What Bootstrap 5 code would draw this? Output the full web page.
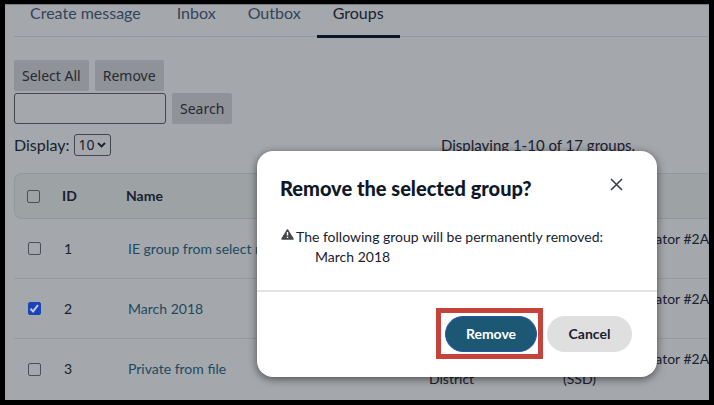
<!DOCTYPE html>
<html lang="en">
<head>
<meta charset="utf-8">
<meta name="viewport" content="width=device-width, initial-scale=1">
<title>Groups</title>
<link href="https://cdn.jsdelivr.net/npm/bootstrap@5.3.0/dist/css/bootstrap.min.css" rel="stylesheet">
<style>
body { font-family: Lato, "Liberation Sans", sans-serif; font-size: 15px; line-height: 20px; color: #19212f; background: #000; }
.frame { height: 100vh; padding: 4px 5px 5px; }
.screen { background: #a4a7ac; overflow: hidden; box-shadow: inset 0 1px 1px #777a7f; }
.tabs { border-bottom: 1px solid #94979d; height: 33px; margin-left: 9px; }
.tabs .nav-link { padding: 0 16px; height: 34px; font-size: 16px; line-height: 17px; color: #33445b; white-space: nowrap; border-bottom: 3px solid transparent; }
.tabs .nav-link:first-child { padding-right: 20px; }
.tabs .nav-link.active { color: #19212f; border-bottom-color: #0c1626; }
.tools { padding: 23px 0 0 9px; font-size: 15px; }
.tool-gap { gap: 6px; }
.tool-btn { font-family: "Noto Sans", sans-serif; font-size: 14px; line-height: 19px; height: 31px; padding: 6px 8px; border: 0; border-radius: 2px; background: #8f9298; color: #272a30; }
.search-row { margin-top: 2px; }
.search-box { width: 152px; height: 31px; border: 1px solid #43464c; border-radius: 3px; background: transparent; }
.count-row { margin-top: 10px; }
.count-label { font-size: 16px; }
.count-select { width: 37px; height: 22px; padding: 0 4px; font-family: "Noto Sans", sans-serif; font-size: 14px; line-height: 18px; border: 1px solid #43464c; border-radius: 3px; color: #19212f; appearance: none;
  background: url("data:image/svg+xml,%3Csvg xmlns='http://www.w3.org/2000/svg' viewBox='0 0 9 6'%3E%3Cpath d='M1 1l3.500 3.500L8 1' fill='none' stroke='%2319212f' stroke-width='1.800'/%3E%3C/svg%3E") no-repeat right 4px center / 9px 6px; }
.display-total { width: 268px; font-size: 15px; }
.grid-wrap { margin: 17px 0 0 9px; }
.group-table { table-layout: fixed; width: 100%; border-collapse: separate; border-spacing: 0; white-space: nowrap; font-size: 14px; }
.group-table th { height: 46px; padding: 0; background: #9da2a5; border: solid #92979b; border-width: 1px 0; font-weight: 700; }
.group-table th:first-child { border-left-width: 1px; border-radius: 8px 0 0 8px; }
.group-table td { height: 60px; padding: 0; vertical-align: middle; border-bottom: 1px solid #969a9f; }
.group-table tr:last-child td { border-bottom: 0; }
.group-table th:first-child { padding-left: 12px; }
.group-table td:first-child { padding-left: 14px; }
.group-table td:nth-child(2), .group-table td:nth-child(3) { padding-left: 2px; }
.group-table a { color: #1c4a60; text-decoration: none; }
.c-check { width: 48px; } .c-id { width: 64px; } .c-name { width: 303px; } .c-org { width: 134px; } .c-code { width: 33px; }
.tick { display: block; appearance: none; width: 13px; height: 13px; margin: 0; border: 1px solid #4c4f55; border-radius: 2px; background: transparent; }
.tick:checked { border-color: #1b43b8; background: #1b43b8 url("data:image/svg+xml,%3Csvg xmlns='http://www.w3.org/2000/svg' viewBox='0 0 13 13'%3E%3Cpath d='M2.500 6.800l2.600 2.600L10 3' fill='none' stroke='%23c4c9d4' stroke-width='2'/%3E%3C/svg%3E") center / 13px 13px; }
.dialog-layer { position: absolute; inset: 151px 57px auto 257px; }
.dialog-box { border: 0; border-radius: 16px; background: #fff; box-shadow: 0 2px 8px rgba(0,0,0,.55); color: #19212f; }
.dialog-head { padding: 23px 34px 0 23px; }
.dialog-title { font-size: 20px; line-height: 28px; font-weight: 900; color: #0f1828; white-space: nowrap; }
.close-btn { padding: 0; border: 0; background: none; line-height: 0; margin-top: 4px; }
.dialog-text { padding: 25px 24px 23px; font-size: 14px; border-bottom: 2px solid #e2e3e4; }
.dialog-text .item { padding-left: 34px; }
.warn-line { gap: 2px; }
.dialog-foot { padding: 16px 25px 18px; font-size: 14px; }
.callout-frame { border: 5px solid #c5433a; padding: 3px 1px 2px 4px; }
.pill { height: 36px; border-radius: 18px; font-size: 14px; line-height: 20px; font-weight: 700; padding: 0; }
.pill-remove { width: 92px; border: 1px solid #2456ae; background: #1c5874; color: #fff; }
.pill-cancel { width: 85px; border: 0; background: #dfdfdf; color: #19212f; }
</style>
</head>
<body>
<div class="frame d-flex">
  <main class="screen flex-grow-1">
    <nav class="nav tabs flex-nowrap" aria-label="Messages">
      <a class="nav-link" href="#">Create message</a>
      <a class="nav-link" href="#">Inbox</a>
      <a class="nav-link" href="#">Outbox</a>
      <a class="nav-link active" href="#" aria-current="page">Groups</a>
    </nav>
    <div class="tools">
      <div class="d-flex tool-gap">
        <button type="button" class="tool-btn">Select All</button>
        <button type="button" class="tool-btn">Remove</button>
      </div>
      <form class="d-flex tool-gap search-row">
        <input type="text" class="search-box" aria-label="Search groups">
        <button type="button" class="tool-btn">Search</button>
      </form>
      <div class="d-flex justify-content-between align-items-center count-row">
        <div class="d-flex align-items-center gap-1">
          <label for="count" class="count-label">Display:</label>
          <select id="count" class="count-select"><option>10</option></select>
        </div>
        <div class="display-total">Displaying 1-10 of 17 groups.</div>
      </div>
    </div>
    <div class="grid-wrap">
      <table class="group-table">
        <colgroup><col class="c-check"><col class="c-id"><col class="c-name"><col class="c-org"><col class="c-code"><col></colgroup>
        <thead><tr><th><input type="checkbox" class="tick" aria-label="Select all groups"></th><th>ID</th><th>Name</th><th></th><th></th><th></th></tr></thead>
        <tbody>
          <tr><td><input type="checkbox" class="tick" aria-label="Select group 1"></td><td>1</td><td><a href="#">IE group from select members</a></td><td></td><td></td><td>Administrator #2A<br>&nbsp;</td></tr>
          <tr><td><input type="checkbox" class="tick" checked aria-label="Select group 2"></td><td>2</td><td><a href="#">March 2018</a></td><td></td><td></td><td>Administrator #2A<br>&nbsp;</td></tr>
          <tr><td><input type="checkbox" class="tick" aria-label="Select group 3"></td><td>3</td><td><a href="#">Private from file</a></td><td>School<br>District</td><td>&nbsp;<br>(SSD)</td><td>Administrator #2A<br>&nbsp;</td></tr>
        </tbody>
      </table>
    </div>
  </main>
</div>
<div class="dialog-layer" role="dialog" aria-modal="true" aria-labelledby="dlg-title">
  <div class="dialog-box">
    <div class="dialog-head d-flex justify-content-between align-items-start">
      <h2 class="dialog-title mb-0" id="dlg-title">Remove the selected group?</h2>
      <button type="button" class="close-btn" aria-label="Close"><svg width="13" height="13" viewBox="0 0 13 13" fill="none" stroke="#343b47" stroke-width="1.500"><path d="M1 1l11 11M12 1L1 12"/></svg></button>
    </div>
    <div class="dialog-text">
      <div class="d-flex align-items-start text-nowrap warn-line"><svg width="13" height="14" viewBox="0 0 13 14" aria-hidden="true"><path d="M6.500 3L12 12H1z" fill="#45474b" stroke="#45474b" stroke-width="1.500" stroke-linejoin="round"/><path d="M6.500 5v3.500M6.500 9.700v1.300" stroke="#fff" stroke-width="1.400"/></svg>The following group will be permanently removed:</div>
      <div class="item">March 2018</div>
    </div>
    <div class="dialog-foot d-flex justify-content-end align-items-center">
      <div class="callout-frame me-1"><button type="button" class="pill pill-remove d-block">Remove</button></div>
      <button type="button" class="pill pill-cancel">Cancel</button>
    </div>
  </div>
</div>
<script src="https://cdn.jsdelivr.net/npm/bootstrap@5.3.0/dist/js/bootstrap.bundle.min.js"></script>
</body>
</html>
